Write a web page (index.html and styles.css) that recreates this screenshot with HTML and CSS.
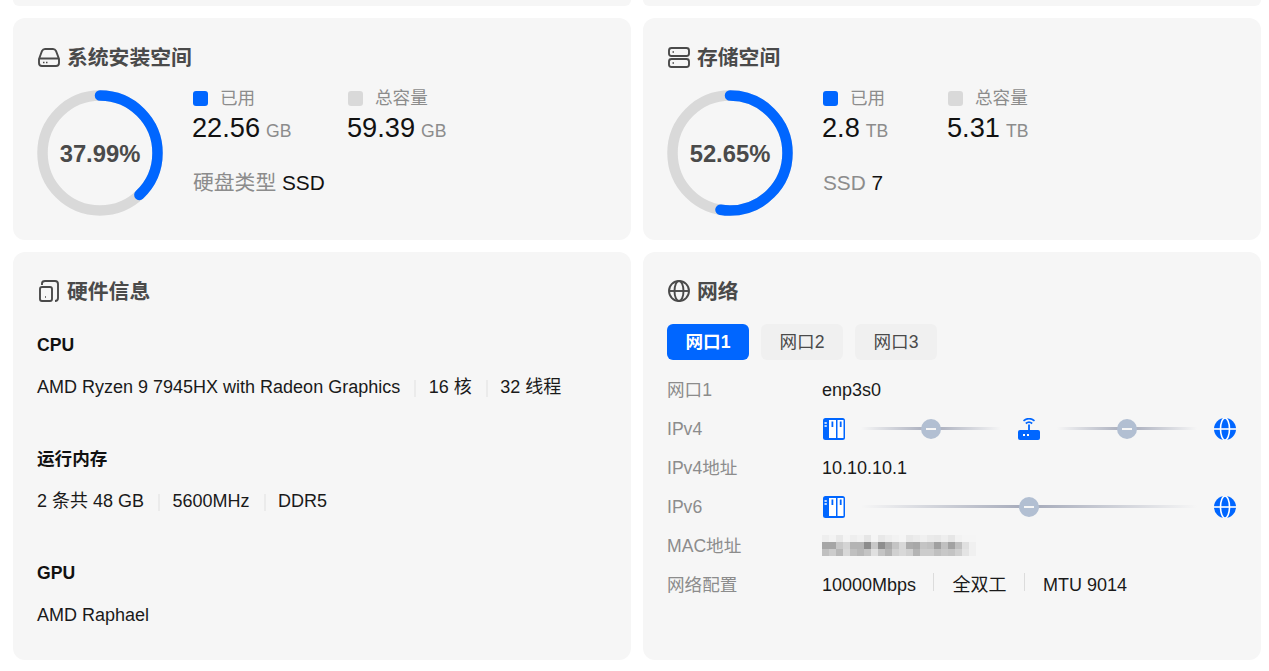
FILE: index.html
```html
<!DOCTYPE html>
<html lang="zh-CN">
<head>
  <meta charset="UTF-8">
  <title>系统信息</title>
  <link rel="stylesheet" href="styles.css">
</head>
<body>

  <div class="grid">
    <div class="card card-cut"></div>
    <div class="card card-cut"></div>

    <div class="card">
      <div class="title">
        <svg class="title-icon" viewBox="0 0 24 24"><path d="M2 14 L5 6 Q6 4 8 4 H16 Q18 4 19 6 L22 14 V18 Q22 21 19 21 H5 Q2 21 2 18 Z M2 13.5 H22"/><path class="dots" d="M6 17.5 H7.5 M9 17.5 H10.500"/></svg>
        <span>系统安装空间</span>
      </div>
      <div class="usage">
        <div class="donut">
          <svg viewBox="0 0 126 126">
            <circle class="donut-track" cx="63" cy="63" r="57.5" pathLength="100"/>
            <circle class="donut-value" cx="63" cy="63" r="57.5" pathLength="100" stroke-dasharray="37.99 100"/>
          </svg>
          <span class="donut-text">37.99%</span>
        </div>
        <div class="info">
          <div class="stats">
            <div class="stat stat-wide">
              <div class="legend"><i class="mark mark-used"></i>已用</div>
              <div class="amount">22.56<small>GB</small></div>
            </div>
            <div class="stat">
              <div class="legend"><i class="mark mark-total"></i>总容量</div>
              <div class="amount">59.39<small>GB</small></div>
            </div>
          </div>
          <div class="extra"><span>硬盘类型</span> SSD</div>
        </div>
      </div>
    </div>

    <div class="card">
      <div class="title">
        <svg class="title-icon" viewBox="0 0 24 24"><rect x="2" y="3" width="20" height="8" rx="2.500"/><rect x="2" y="14" width="20" height="8" rx="2.500"/><path class="dots" d="M5.500 7 H7 M5.500 18 H7"/></svg>
        <span>存储空间</span>
      </div>
      <div class="usage">
        <div class="donut">
          <svg viewBox="0 0 126 126">
            <circle class="donut-track" cx="63" cy="63" r="57.5" pathLength="100"/>
            <circle class="donut-value" cx="63" cy="63" r="57.5" pathLength="100" stroke-dasharray="52.65 100"/>
          </svg>
          <span class="donut-text">52.65%</span>
        </div>
        <div class="info">
          <div class="stats">
            <div class="stat stat-narrow">
              <div class="legend"><i class="mark mark-used"></i>已用</div>
              <div class="amount">2.8<small>TB</small></div>
            </div>
            <div class="stat">
              <div class="legend"><i class="mark mark-total"></i>总容量</div>
              <div class="amount">5.31<small>TB</small></div>
            </div>
          </div>
          <div class="extra"><span>SSD</span> 7</div>
        </div>
      </div>
    </div>

    <div class="card">
      <div class="title">
        <svg class="title-icon" viewBox="0 0 24 24"><rect x="3" y="8" width="12" height="14" rx="2"/><path d="M5 6 V4.500 Q5 2 8 2 H18 Q21 2 21 5 V19 Q21 22 18 22"/><path class="dots" d="M8 18 H9"/></svg>
        <span>硬件信息</span>
      </div>
      <div class="hw">
        <h3>CPU</h3>
        <div class="hw-row"><span>AMD Ryzen 9 7945HX with Radeon Graphics</span><span>16 核</span><span>32 线程</span></div>
      </div>
      <div class="hw">
        <h3>运行内存</h3>
        <div class="hw-row"><span>2 条共 48 GB</span><span>5600MHz</span><span>DDR5</span></div>
      </div>
      <div class="hw">
        <h3>GPU</h3>
        <div class="hw-row"><span>AMD Raphael</span></div>
      </div>
    </div>

    <div class="card">
      <div class="title">
        <svg class="title-icon" viewBox="0 0 24 24"><circle cx="12" cy="12" r="10"/><ellipse cx="12" cy="12" rx="4.500" ry="10"/><path d="M2 12 H22"/></svg>
        <span>网络</span>
      </div>
      <div class="tabs">
        <div class="tab tab-active">网口1</div>
        <div class="tab">网口2</div>
        <div class="tab">网口3</div>
      </div>
      <div class="net-row">
        <div class="net-label">网口1</div>
        <div>enp3s0</div>
      </div>
      <div class="net-row">
        <div class="net-label">IPv4</div>
        <div class="path">
          <svg class="node node-switch" viewBox="0 0 22 22"><use href="#icon-switch"/></svg>
          <div class="link"><i class="knob"></i></div>
          <svg class="node" viewBox="0 0 22 22"><use href="#icon-router"/></svg>
          <div class="link"><i class="knob"></i></div>
          <svg class="node" viewBox="0 0 22 22"><use href="#icon-globe"/></svg>
        </div>
      </div>
      <div class="net-row">
        <div class="net-label">IPv4地址</div>
        <div>10.10.10.1</div>
      </div>
      <div class="net-row">
        <div class="net-label">IPv6</div>
        <div class="path">
          <svg class="node node-switch" viewBox="0 0 22 22"><use href="#icon-switch"/></svg>
          <div class="link"><i class="knob"></i></div>
          <svg class="node" viewBox="0 0 22 22"><use href="#icon-globe"/></svg>
        </div>
      </div>
      <div class="net-row">
        <div class="net-label">MAC地址</div>
        <!-- pixelated on purpose -->
        <svg class="mosaic" width="154" height="21" viewBox="0 0 22 3" shape-rendering="crispEdges">
          <g id="mosaic-cells"></g>
        </svg>
      </div>
      <div class="net-row">
        <div class="net-label">网络配置</div>
        <div class="net-meta"><span>10000Mbps</span><span>全双工</span><span>MTU 9014</span></div>
      </div>
    </div>
  </div>

  <!-- blue icons used on the network paths -->
  <svg class="icon-defs" width="0" height="0">
    <symbol id="icon-switch" viewBox="0 0 22 22">
      <rect width="22" height="22" rx="2.500" fill="#0066ff"/>
      <rect x="6" y="2" width="7" height="18" fill="#fff"/>
      <rect x="14.500" y="2" width="6" height="18" fill="#fff"/>
      <rect x="8.500" y="3.500" width="1.800" height="5.500" fill="#0066ff"/>
      <rect x="16.800" y="3.500" width="1.800" height="5.500" fill="#0066ff"/>
      <path d="M1.500 5 H3.800 M1.500 8 H3.800" stroke="#fff" stroke-width="1.300"/>
    </symbol>
    <symbol id="icon-router" viewBox="0 0 22 22">
      <rect y="12" width="22" height="10" rx="2" fill="#0066ff"/>
      <path d="M11 6.500 V12" stroke="#0066ff" stroke-width="1.800"/>
      <path d="M7.800 5.500 Q11 2.800 14.200 5.500 M5.500 2.800 Q11 -1.500 16.500 2.800" fill="none" stroke="#0066ff" stroke-width="1.700"/>
      <path d="M5 17 H7 M9 17 H11" stroke="#fff" stroke-width="1.800"/>
    </symbol>
    <symbol id="icon-globe" viewBox="0 0 22 22">
      <circle cx="11" cy="11" r="11" fill="#0066ff"/>
      <ellipse cx="11" cy="11" rx="4.500" ry="11" fill="none" stroke="#fff" stroke-width="1.600"/>
      <path d="M0 11 H22" stroke="#fff" stroke-width="1.600"/>
    </symbol>
  </svg>

  <script>
    // grey values of the blurred MAC address, one string per row
    const mosaicRows = [
      ['ee','f3','e8','f4','ee','f2','e6','f5','e8','ee','f2','f5','e8','ec','f0','ea','e8','ee','e6','f2','f5','f5'],
      ['a6','a6','c8','d4','b4','b4','8c','c8','8e','aa','c4','d8','ac','a8','c4','c0','a0','c0','a2','c0','e0','f0'],
      ['c0','cc','b8','d8','c0','b8','c4','e0','c4','b4','d0','d8','d0','b4','cc','cc','c0','c8','c4','d0','e4','f0']
    ];
    const mosaic = document.getElementById('mosaic-cells');
    mosaicRows.forEach((row, y) => {
      row.forEach((grey, x) => {
        const cell = document.createElementNS('http://www.w3.org/2000/svg', 'rect');
        cell.setAttribute('x', x);
        cell.setAttribute('y', y);
        cell.setAttribute('width', 1);
        cell.setAttribute('height', 1);
        cell.setAttribute('fill', '#' + grey + grey + grey);
        mosaic.appendChild(cell);
      });
    });
  </script>

</body>
</html>
```

FILE: styles.css
```css
* {
  box-sizing: border-box;
}

body {
  margin: 0;
  background-color: #fff;
  color: #1a1a1a;
  font-family: "Liberation Sans", "Noto Sans CJK SC", sans-serif;
  font-size: 18px;
  line-height: 24px;
}

.grid {
  display: grid;
  grid-template-columns: 618px 618px;
  grid-template-rows: 6px 222px 408px;
  gap: 12px;
  padding: 0 8px 11px 13px;
}

.card {
  background-color: #f6f6f6;
  border-radius: 12px;
  padding: 24px;
}

/* the row above is scrolled out, only its bottom edge shows */
.card-cut {
  padding: 0;
  border-radius: 0 0 12px 12px;
}

.title {
  display: flex;
  align-items: center;
  gap: 6px;
  height: 30px;
  color: #4a4a4a;
  font-size: 20.8px;
  font-weight: 700;
  line-height: 30px;
}

.title span {
  padding-top: 2px;
}

.title-icon {
  flex: none;
  width: 24px;
  height: 24px;
  fill: none;
  stroke: #4a4a4a;
  stroke-width: 1.9;
}

.title-icon .dots {
  stroke-width: 1.5;
}

/* disk usage cards */
.usage {
  display: flex;
  gap: 30px;
  margin-top: 16px;
}

.donut {
  position: relative;
  flex: none;
  width: 126px;
  height: 126px;
  margin-top: 2px;
}

.donut svg {
  display: block;
  width: 126px;
  height: 126px;
  transform: rotate(-90deg);
}

.donut circle {
  fill: none;
  stroke-width: 10.5;
}

.donut-track {
  stroke: #d9d9d9;
}

.donut-value {
  stroke: #0066ff;
  stroke-linecap: round;
}

.donut-text {
  position: absolute;
  inset: 0;
  display: flex;
  align-items: center;
  justify-content: center;
  padding-top: 2px;
  color: #4a4a4a;
  font-size: 23.8px;
  font-weight: 700;
}

.stats {
  display: flex;
}

.stat-wide {
  width: 155px;
}

.stat-narrow {
  width: 125px;
}

.legend {
  display: flex;
  align-items: center;
  height: 20px;
  color: #8c8c8c;
  font-size: 17.6px;
  line-height: 20px;
}

.mark {
  width: 15px;
  height: 15px;
  margin-right: 12px;
  border-radius: 3px;
}

.mark-used {
  background-color: #0066ff;
}

.mark-total {
  background-color: #d9d9d9;
}

.amount {
  height: 42px;
  margin-left: -1px;
  color: #111;
  line-height: 40px;
  font-size: 27.2px;
}

.amount small {
  margin-left: 6px;
  color: #8c8c8c;
  font-size: 17.6px;
}

.extra {
  margin-top: 19px;
  color: #111;
  line-height: 28px;
  font-size: 20.8px;
}

.extra span {
  color: #8c8c8c;
}

/* hardware card */
.hw {
  margin-bottom: 48px;
}

.hw:last-child {
  margin-bottom: 0;
}

.hw h3 {
  margin: 27px 0 18px;
  color: #111;
  line-height: 24px;
  font-size: 17.6px;
}

.hw + .hw h3 {
  margin-top: 0;
}

.hw-row {
  display: flex;
}

.hw-row span + span {
  position: relative;
  margin-left: 14px;
  padding-left: 14.5px;
}

.hw-row span + span::before {
  content: "";
  position: absolute;
  left: 0;
  top: 5px;
  width: 2px;
  height: 17px;
  background-color: #ebebeb;
}

/* network card */
.tabs {
  display: flex;
  gap: 12px;
  margin-top: 18px;
  margin-bottom: 10px;
}

.tab {
  width: 82px;
  height: 36px;
  border-radius: 6px;
  background-color: #f0f0f0;
  color: #4a4a4a;
  font-size: 17.6px;
  line-height: 36px;
  text-align: center;
}

.tab-active {
  background-color: #0066ff;
  color: #fff;
  font-weight: 700;
}

.net-row {
  display: flex;
  align-items: center;
  height: 39px;
}

.net-label {
  flex: none;
  width: 155px;
  color: #8c8c8c;
  font-size: 17.6px;
}

.path {
  display: flex;
  align-items: center;
  width: 414px;
}

.node {
  flex: none;
  width: 22px;
  height: 22px;
}

.node-switch {
  margin-left: 1px;
  margin-right: -1px;
}

.link {
  flex: 1;
  display: flex;
  align-items: center;
  justify-content: center;
  height: 3px;
  margin: 0 17px;
  background: linear-gradient(90deg, rgba(164, 169, 185, 0), #a4a9b9 50%, rgba(164, 169, 185, 0));
}

.knob {
  display: flex;
  align-items: center;
  justify-content: center;
  flex: none;
  width: 20px;
  height: 20px;
  border-radius: 50%;
  background-color: #b2bfd2;
}

.knob::before {
  content: "";
  width: 10px;
  height: 2px;
  background-color: #f6f6f6;
}

.mosaic {
  display: block;
}

.net-meta {
  display: flex;
}

.net-meta span + span {
  position: relative;
  margin-left: 17px;
  padding-left: 19.5px;
}

/* separator sits a little higher than the text here */
.net-meta span + span::before {
  content: "";
  position: absolute;
  left: 0;
  top: 0;
  width: 1px;
  height: 18px;
  background-color: #dcdcdc;
}

.icon-defs {
  position: absolute;
}
```
